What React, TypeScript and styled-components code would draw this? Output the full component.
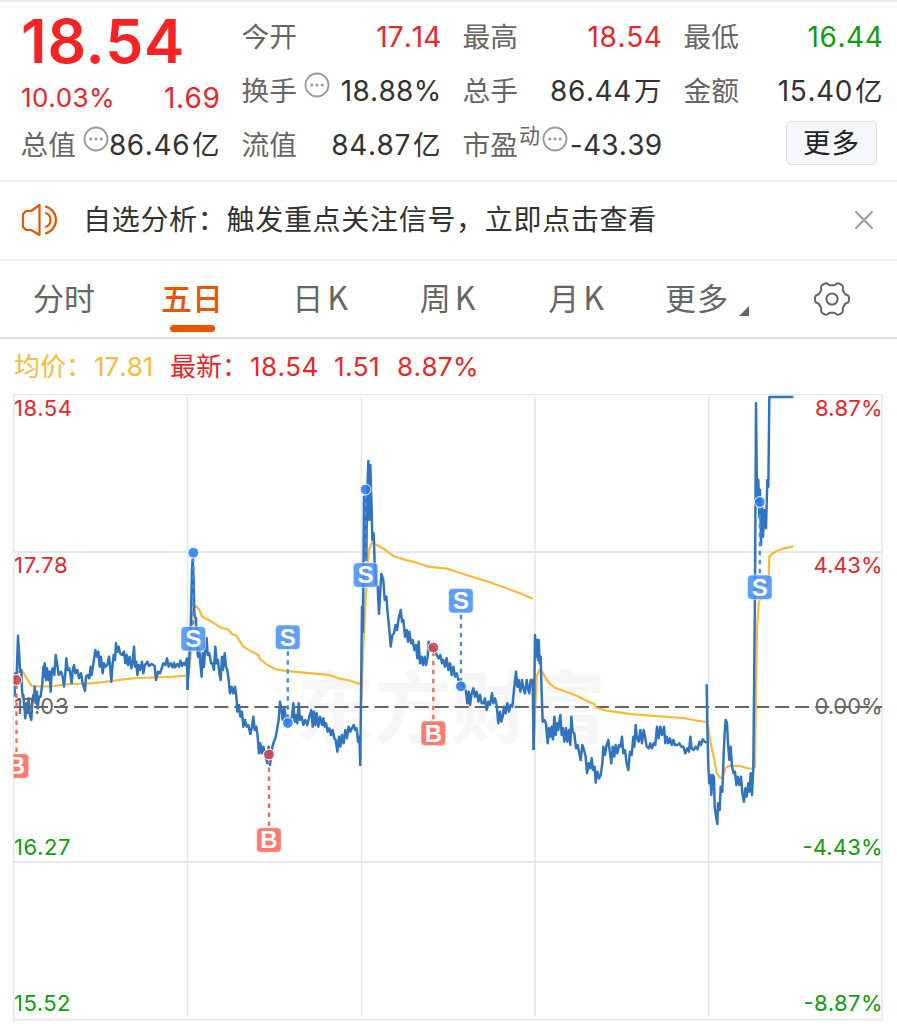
import React from "react";
import styled, { createGlobalStyle } from "styled-components";

const RED = "#e8262b";
const GREEN = "#109c10";
const INK = "#333333";
const GREY = "#666666";
const ORANGE = "#ea5504";
const BLUE = "#3074c0";
const YELLOW = "#fbb93a";

const GlobalStyle = createGlobalStyle`
  * { box-sizing: border-box; }
  body {
    margin: 0;
    background: #fff;
    color: ${INK};
    font-family: Inter, "Noto Sans CJK SC", sans-serif;
  }
`;

const Page = styled.main`
  width: 897px;
  height: 1024px;
  overflow: hidden;
  display: flex;
  flex-direction: column;
`;

const Quote = styled.header`
  height: 182px;
  border-top: 2px solid #eeeeee;
  border-bottom: 2px solid #eeeeee;
  padding: 8px 14px 0 21px;
  display: grid;
  grid-template-columns: repeat(4, 199px);
  column-gap: 22px;
`;

const Column = styled.div`
  display: flex;
  flex-direction: column;
`;

const Row = styled.div<{ $height?: number }>`
  height: ${(p) => p.$height ?? 54}px;
  display: flex;
  align-items: center;
  white-space: nowrap;
`;

const Price = styled.div`
  height: 62px;
  line-height: 62px;
  margin-left: 0;
  font-size: 60.5px;
  font-weight: 600;
  letter-spacing: 0.8px;
  color: #f52323;
`;

const Label = styled.span`
  margin-left: -0.5px;
  font-size: 27.7px;
  line-height: 34px;
  color: ${GREY};
`;

const Value = styled.span<{ $color?: string; $spacing?: number }>`
  margin: 0 -0.5px 0 auto;
  font-size: 28px;
  line-height: 34px;
  letter-spacing: ${(p) => p.$spacing ?? 0.6}px;
  font-kerning: none;
  color: ${(p) => p.$color ?? INK};
`;

const Unit = styled.span`
  margin: 0 1px 0 2px;
  font-size: 27.5px;
  letter-spacing: 0;
`;

const Percent = styled.span`
  font-size: 26px;
  letter-spacing: 0.5px;
  color: ${RED};
`;

const Sup = styled.sup`
  font-size: 21px;
  line-height: 1;
  color: ${GREY};
  align-self: flex-start;
  margin: 7px 0 0 1px;
`;

const InfoMark = styled.svg<{ $gap: number }>`
  flex: none;
  width: 26px;
  height: 26px;
  margin: -12px 0 0 ${(p) => p.$gap}px;
`;

const MoreButton = styled.button`
  width: 91px;
  height: 44px;
  margin: -5px 6px 0 auto;
  padding: 0;
  border: 1px solid #dcdfe6;
  border-radius: 5px;
  background: #f6f7fa;
  color: #222;
  font: 27.5px/40px Inter, "Noto Sans CJK SC", sans-serif;
  letter-spacing: 1px;
`;

const Notice = styled.section`
  height: 79px;
  border-bottom: 2px solid #eeeeee;
  padding: 0 23px 1px 21px;
  display: flex;
  align-items: center;
`;

const NoticeText = styled.p`
  margin: 0 auto 0 22px;
  font-size: 28px;
  line-height: 34px;
  letter-spacing: 0.7px;
`;

const Tabs = styled.nav`
  height: 78px;
  border-bottom: 2px solid #dcdee3;
  display: flex;
`;

const Tab = styled.div<{ $width: number; $active?: boolean }>`
  width: ${(p) => p.$width}px;
  display: flex;
  flex-direction: column;
  align-items: center;
  font-size: 31px;
  line-height: 46px;
  padding-top: 15px;
  font-weight: ${(p) => (p.$active ? 500 : 400)};
  color: ${(p) => (p.$active ? ORANGE : GREY)};
  white-space: pre;

  &::after {
    content: "";
    width: 45px;
    height: 7px;
    margin-top: 3px;
    border-radius: 4px;
    background: ${(p) => (p.$active ? ORANGE : "transparent")};
  }
`;

const TabCaption = styled.span`
  display: flex;
  align-items: flex-end;
  letter-spacing: 1px;
`;

const Period = styled.span`
  font-family: "Noto Sans CJK SC", sans-serif;
  font-size: 32px;
  line-height: 1;
  margin-left: 4px;
`;

const Corner = styled.i`
  width: 0;
  height: 0;
  margin: 0 0 6px 10px;
  border-left: 10px solid transparent;
  border-bottom: 10px solid ${GREY};
`;

const Gear = styled.svg`
  width: 38px;
  height: 38px;
  margin: 19px 0 0 39.5px;
`;

const Legend = styled.div`
  height: 55px;
  padding: 1px 0 0 14px;
  display: flex;
  align-items: center;
  font-size: 26px;
  line-height: 32px;
  font-kerning: none;
`;

const LegendItem = styled.span<{ $width: number; $color?: string; $spacing?: number }>`
  width: ${(p) => p.$width}px;
  white-space: nowrap;
  letter-spacing: ${(p) => p.$spacing ?? 0.4}px;
  color: ${(p) => p.$color ?? RED};
`;

const ChartSvg = styled.svg`
  display: block;
  width: 897px;
  height: 630px;
`;

const Info = ({ gap }: { gap: number }) => (
  <InfoMark viewBox="0 0 26 26" $gap={gap}>
    <circle cx="13" cy="13" r="11.5" fill="none" stroke="#999" strokeWidth="1.8" />
    <circle cx="7.8" cy="13" r="1.5" fill="#999" />
    <circle cx="13" cy="13" r="1.5" fill="#999" />
    <circle cx="18.2" cy="13" r="1.5" fill="#999" />
  </InfoMark>
);

// One entry per trading day; samples are stored at three units per pixel from the origin.
const days = [
  {
    x: 0,
    y: 390,
    average:
      "46,850 58,845 68,845 78,862 87,875 95,888 125,890 160,888 210,882 270,880 300,877 335,873 370,868 410,864 470,862 520,860 561,857",
    price:
      "44,920 46,850 50,860 54,737 58,800 60,845 64,840 66,900 68,920 70,915 72,940 76,985 79,940 82,965 86,925 88,970 94,990 97,930 100,915 102,930 104,890 107,940 111,905 113,955 117,920 122,920 127,880 130,830 132,860 134,820 138,870 141,835 145,870 149,845 152,905 155,845 158,835 163,855 167,795 172,825 176,855 183,845 188,860 192,890 196,850 199,805 203,840 208,835 212,860 215,880 218,840 222,825 226,850 232,840 237,865 243,850 248,880 255,903 258,860 263,855 268,865 272,830 275,855 281,815 286,780 291,800 295,785 299,830 303,800 308,850 312,820 317,830 322,825 327,800 331,835 334,875 338,820 341,795 345,810 348,760 352,785 356,770 360,790 366,795 372,785 376,820 380,795 384,825 389,800 394,835 398,815 402,770 405,830 409,815 412,855 416,825 420,840 426,815 430,850 435,825 442,815 447,828 455,822 464,828 468,870 474,845 480,850 485,835 490,820 496,825 501,805 506,830 512,820 518,832 522,818 526,832 532,822 537,830 541,812 546,828 551,818 556,825 561,805 563,900",
  },
  {
    x: 180,
    y: 530,
    average:
      "25,440 33,370 38,240 48,228 58,240 66,260 90,272 125,294 145,298 155,312 168,316 190,350 210,362 235,375 240,387 262,405 285,417 310,422 370,428 430,433 455,437 475,445 510,452 541,463",
    price:
      "22,480 27,400 32,300 36,120 38,88 41,150 43,250 46,265 48,265 50,330 54,380 58,360 61,400 65,440 68,370 72,410 76,350 80,325 83,375 88,370 93,400 97,400 102,420 106,350 110,400 114,390 118,430 122,450 126,380 129,420 134,370 138,410 142,420 146,450 150,490 155,470 160,490 165,470 169,500 172,545 177,525 181,560 186,545 190,590 195,570 200,590 205,585 211,612 216,590 220,560 224,600 229,590 233,620 237,670 241,640 245,670 250,650 255,670 262,700 266,650 270,705 275,660 280,640 286,625 291,600 296,570 300,515 304,535 308,570 313,535 317,560 321,580 330,570 336,560 340,520 344,575 348,555 352,580 356,520 360,570 365,560 370,585 376,570 382,585 388,560 394,540 398,590 402,545 406,585 410,550 415,590 420,560 426,585 430,565 434,590 438,580 443,605 448,595 453,615 458,600 463,625 467,630 472,665 477,620 481,650 486,615 491,640 496,600 501,625 506,590 511,605 516,595 521,585 526,600 530,595 534,635 538,620 541,708",
  },
  {
    x: 340,
    y: 450,
    average:
      "64,750 70,590 76,470 82,350 87,300 95,278 105,282 130,296 160,318 190,328 230,338 265,350 320,356 370,372 440,394 500,415 540,430 578,446",
    price:
      "61,928 66,470 69,545 72,140 74,330 77,150 79,330 81,150 85,33 88,210 91,45 95,180 97,270 101,250 104,340 108,400 113,410 117,492 121,420 124,372 130,390 134,450 139,440 143,490 148,540 152,590 157,555 162,550 167,525 171,540 176,505 182,480 186,515 190,510 195,560 200,540 204,575 208,545 213,580 218,570 223,600 228,585 232,625 236,575 240,640 245,620 249,645 254,620 258,645 263,620 266,575 270,600 275,590 280,592 285,600 290,615 296,625 301,615 306,640 310,630 315,650 320,625 325,660 330,640 335,675 340,650 345,680 350,670 355,690 360,690 366,705 372,710 378,725 382,760 386,725 390,765 395,730 400,715 405,740 410,725 415,755 420,735 425,760 430,760 435,745 440,780 445,755 450,765 456,730 460,760 465,745 470,765 475,820 480,785 484,815 488,800 492,770 497,790 502,760 507,785 512,765 517,770 522,720 528,665 532,710 536,690 541,725 546,690 550,715 555,730 560,690 564,715 568,730 572,690 578,690 581,900",
  },
  {
    x: 520,
    y: 620,
    average:
      "42,360 46,260 50,170 58,150 66,155 76,172 88,190 104,203 130,212 150,220 172,228 195,240 222,252 230,264 260,272 340,283 430,290 490,294 520,300 558,306",
    price:
      "41,390 45,45 49,110 52,60 54,120 56,60 59,130 62,110 65,220 68,305 73,300 78,310 83,370 87,325 91,350 95,320 99,358 103,290 107,345 111,310 115,330 121,285 125,345 129,325 133,365 138,325 142,365 147,330 151,375 154,290 158,335 163,340 168,385 173,375 177,395 182,420 187,375 192,390 197,410 201,460 206,430 211,445 215,415 219,450 224,440 227,488 232,455 237,475 242,465 247,430 250,380 255,405 260,375 265,360 270,400 274,430 278,380 283,410 287,375 292,400 297,375 302,380 306,350 310,400 315,390 320,430 325,450 330,395 335,405 340,350 343,380 347,315 351,355 356,365 361,330 366,370 371,330 375,350 380,380 386,385 391,370 396,385 401,370 406,375 411,320 416,355 421,320 426,345 432,320 436,370 440,350 445,370 450,355 455,375 460,360 465,375 472,375 478,370 484,380 490,380 496,400 502,385 507,395 511,350 515,385 521,390 527,380 533,388 538,365 543,375 548,358 554,365 560,368",
  },
  {
    x: 690,
    y: 390,
    average:
      "50,996 55,1010 62,1060 72,1105 80,1150 90,1163 98,1163 106,1135 116,1128 150,1128 170,1134 190,1137 195,1130 198,900 201,720 206,640 215,610 230,585 236,560 238,500 245,492 260,483 280,476 310,469",
    price:
      "50,883 52,1010 55,1130 58,1180 61,1155 64,1215 68,1155 72,1160 74,1250 78,1280 82,1302 84,1240 89,1260 92,1190 97,1205 101,1090 104,1030 107,990 111,1000 114,1060 118,1110 122,1070 126,1130 131,1150 135,1145 139,1185 143,1160 148,1185 153,1160 157,1210 162,1235 166,1195 170,1220 175,1180 178,1205 182,1150 186,1215 190,1130 195,600 198,40 201,330 205,270 208,380 210,300 213,465 216,350 219,440 223,360 228,415 232,270 235,290 238,21 310,21",
  },
];

const trades: { kind: "S" | "B"; x: number; dot: number; box: number }[] = [
  { kind: "B", x: 16.5, dot: 680, box: 766 },
  { kind: "S", x: 193.3, dot: 552.7, box: 638.7 },
  { kind: "B", x: 269, dot: 754.5, box: 840 },
  { kind: "S", x: 287.8, dot: 723, box: 637.3 },
  { kind: "S", x: 365.6, dot: 489.5, box: 575 },
  { kind: "B", x: 433.3, dot: 647.5, box: 733.3 },
  { kind: "S", x: 460.9, dot: 686.3, box: 600.7 },
  { kind: "S", x: 759.8, dot: 502, box: 587.3 },
];

const axis = [
  { y: 416, price: "18.54", pw: 58, pct: "8.87%", cw: 67.5, color: RED },
  { y: 573, price: "17.78", pw: 53.5, pct: "4.43%", cw: 69, color: RED },
  { y: 714, price: "17.03", pw: 54.5, pct: "0.00%", cw: 68, color: GREY },
  { y: 855, price: "16.27", pw: 56.5, pct: "-4.43%", cw: 80, color: GREEN },
  { y: 1011, price: "15.52", pw: 56.5, pct: "-8.87%", cw: 79, color: GREEN },
];

const TradeMark = ({ kind, x, dot, box }: (typeof trades)[number]) => {
  const sell = kind === "S";
  const fill = sell ? "#3f8dfd" : "#fd6354";
  const edge = box > dot ? box - 12 : box + 12;
  return (
    <g>
      <line
        x1={x}
        x2={x}
        y1={edge}
        y2={dot}
        stroke={sell ? "#3e8cf0" : "#ee6a5c"}
        strokeWidth="2.3"
        strokeDasharray="4.5 4.5"
        strokeDashoffset="-2"
      />
      <circle cx={x} cy={dot} r="5.4" fill={sell ? "#257cf0" : "#d2454b"} fillOpacity=".87" stroke="#fff" strokeWidth="1" />
      <rect x={x - 12.3} y={box - 12.3} width="24.6" height="24.6" rx="4" fill={fill} fillOpacity=".84" stroke="#fff" strokeOpacity=".7" strokeWidth=".8" />
      <text x={x} y={box + 8.4} textAnchor="middle" fontFamily="Liberation Sans, sans-serif" fontSize="24" fontWeight="700" fill="#fff">
        {kind}
      </text>
    </g>
  );
};

const Chart = () => (
  <ChartSvg viewBox="0 394 897 630">
    <defs>
      <clipPath id="plot">
        <rect x="13.5" y="394" width="869" height="627" />
      </clipPath>
    </defs>
    <text x="296" y="737" fontSize="78" fontWeight="700" fill="#f6f6f6" textLength="310">
      东方财富
    </text>
    <g stroke="#e4e6ec" strokeWidth="1.5" fill="none">
      <rect x="13.7" y="394.5" width="868.3" height="625.2" />
      <path d="M14 552H882M14 862H882" strokeWidth="1.8" />
      <path d="M187.5 397V1016M361.4 397V1016M535 397V1016M708.6 397V1016" />
    </g>
    <line x1="14" x2="882" y1="707" y2="707" stroke="#666" strokeWidth="2.2" strokeDasharray="14 6.03" />
    <g clipPath="url(#plot)">
      <g fill="none" strokeLinejoin="round">
        {days.map((d) => (
          <polyline key={d.x} transform={`translate(${d.x} ${d.y}) scale(.33333)`} points={d.average} stroke={YELLOW} strokeWidth="6.6" />
        ))}
        {days.map((d) => (
          <polyline key={d.x} transform={`translate(${d.x} ${d.y}) scale(.33333)`} points={d.price} stroke={BLUE} strokeWidth="7.4" />
        ))}
      </g>
      {trades.map((t) => (
        <TradeMark key={t.x} {...t} />
      ))}
    </g>
    <g fontSize="22">
      {axis.map((a) => (
        <g key={a.y} fill={a.color}>
          <text x="14" y={a.y} textLength={a.pw}>
            {a.price}
          </text>
          <text x={882.5 - a.cw} y={a.y} textLength={a.cw}>
            {a.pct}
          </text>
        </g>
      ))}
    </g>
  </ChartSvg>
);

const gearPath = (() => {
  const pts: string[] = [];
  for (let i = 0; i <= 120; i++) {
    const a = (i / 120) * Math.PI * 2;
    const r = 15.4 + 1.7 * Math.tanh(2 * Math.cos(6 * a));
    pts.push(`${(19 + r * Math.cos(a)).toFixed(2)} ${(19 + r * Math.sin(a)).toFixed(2)}`);
  }
  return `M${pts.join("L")}Z`;
})();

export default function App() {
  return (
    <>
      <GlobalStyle />
      <Page>
        <Quote>
          <Column>
            <Price>18.54</Price>
            <Row $height={51}>
              <Percent>10.03%</Percent>
              <Value $color={RED}>1.69</Value>
            </Row>
            <Row $height={43}>
              <Label>总值</Label>
              <Info gap={7} />
              <Value>
                86.46<Unit>亿</Unit>
              </Value>
            </Row>
          </Column>
          <Column>
            <Row>
              <Label>今开</Label>
              <Value $color={RED} $spacing={0.1}>17.14</Value>
            </Row>
            <Row>
              <Label>换手</Label>
              <Info gap={7} />
              <Value $spacing={0.3}>18.88%</Value>
            </Row>
            <Row>
              <Label>流值</Label>
              <Value>
                84.87<Unit>亿</Unit>
              </Value>
            </Row>
          </Column>
          <Column>
            <Row>
              <Label>最高</Label>
              <Value $color={RED}>18.54</Value>
            </Row>
            <Row>
              <Label>总手</Label>
              <Value>
                86.44<Unit>万</Unit>
              </Value>
            </Row>
            <Row>
              <Label>市盈</Label>
              <Sup>动</Sup>
              <Info gap={2} />
              <Value $spacing={0.3}>-43.39</Value>
            </Row>
          </Column>
          <Column>
            <Row>
              <Label>最低</Label>
              <Value $color={GREEN}>16.44</Value>
            </Row>
            <Row>
              <Label>金额</Label>
              <Value>
                15.40<Unit>亿</Unit>
              </Value>
            </Row>
            <Row>
              <MoreButton>更多</MoreButton>
            </Row>
          </Column>
        </Quote>
        <Notice>
          <svg width="40" height="34" viewBox="0 0 40 34" fill="none" stroke={ORANGE} strokeWidth="2.2" strokeLinejoin="round">
            <path d="M18.5 2V32L10 27H5L2 24V11L5 8H10Z" />
            <path d="M24 10A7.2 7.2 0 0 1 24 24M24 3.5A13.8 13.8 0 0 1 24 30.5" />
          </svg>
          <NoticeText>自选分析：触发重点关注信号，立即点击查看</NoticeText>
          <svg width="20" height="20" viewBox="0 0 20 20" stroke="#999" strokeWidth="2">
            <path d="M1.5 1.5L18.5 18.5M18.5 1.5L1.5 18.5" />
          </svg>
        </Notice>
        <Tabs>
          <Tab $width={128}>分时</Tab>
          <Tab $width={128} $active>
            五日
          </Tab>
          <Tab $width={128}>
            <span>
              日<Period>K</Period>
            </span>
          </Tab>
          <Tab $width={127}>
            <span>
              周<Period>K</Period>
            </span>
          </Tab>
          <Tab $width={130}>
            <span>
              月<Period>K</Period>
            </span>
          </Tab>
          <Tab $width={132}>
            <TabCaption>
              更多
              <Corner />
            </TabCaption>
          </Tab>
          <Gear viewBox="0 0 38 38" fill="none" stroke={GREY} strokeWidth="2">
            <path d={gearPath} />
            <circle cx="19" cy="19" r="5.6" />
          </Gear>
        </Tabs>
        <Legend>
          <LegendItem $width={80} $color={YELLOW} $spacing={0}>均价：</LegendItem>
          <LegendItem $width={76} $color={YELLOW} $spacing={0}>17.81</LegendItem>
          <LegendItem $width={80} $spacing={0}>最新：</LegendItem>
          <LegendItem $width={84}>18.54</LegendItem>
          <LegendItem $width={63}>1.51</LegendItem>
          <LegendItem $width={90}>8.87%</LegendItem>
        </Legend>
        <Chart />
      </Page>
    </>
  );
}
